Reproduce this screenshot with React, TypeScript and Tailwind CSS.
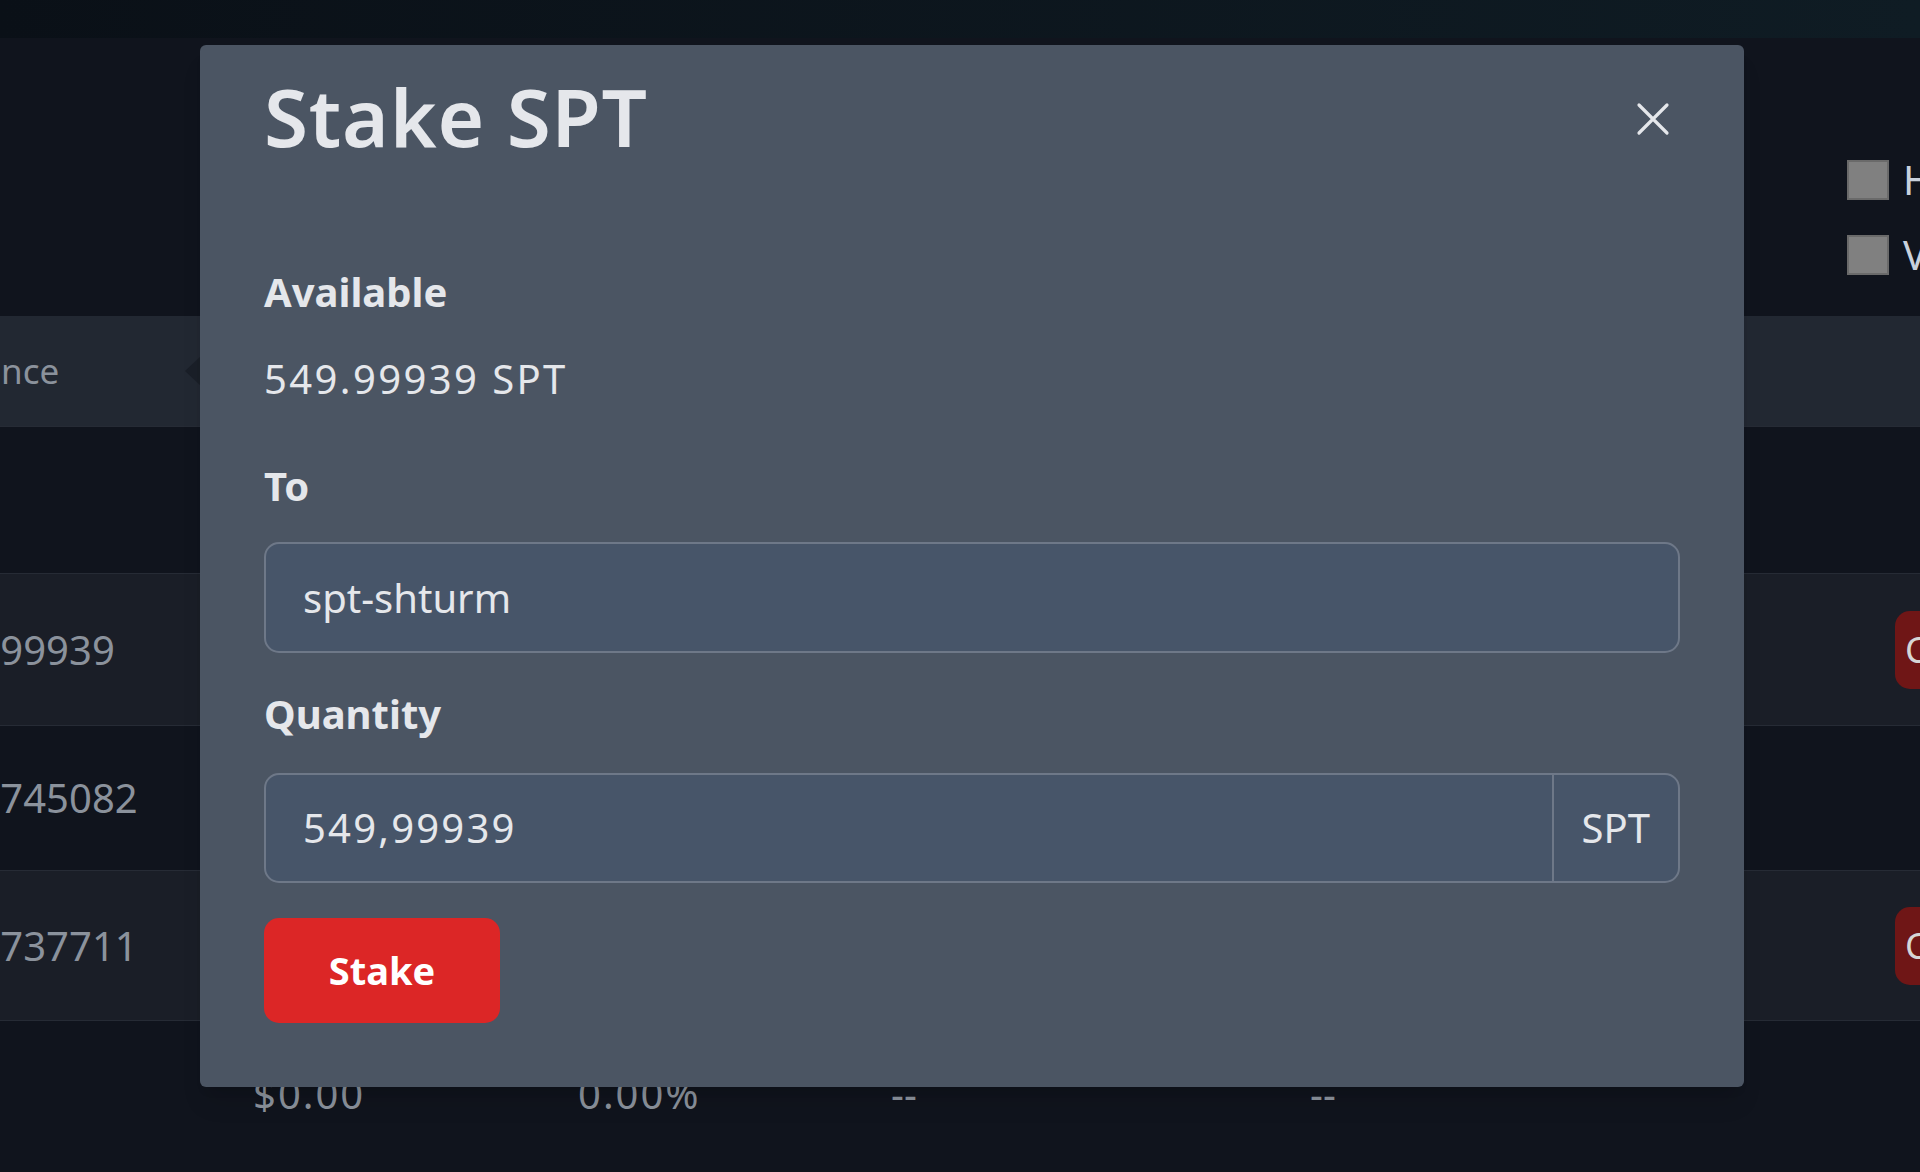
import type { FC } from "react";

const CloseIcon: FC = () => (
  <svg width="34" height="34" viewBox="0 0 34 34" fill="none">
    <path d="M3 3L31 31M31 3L3 31" stroke="#e5e7eb" strokeWidth="3.2" strokeLinecap="round" />
  </svg>
);

const rows = [
  { id: 0, balance: "", light: false, h: "h-[147px]", action: false },
  { id: 1, balance: "549.99939", light: true, h: "h-[152px]", action: true },
  { id: 2, balance: "1.20745082", light: false, h: "h-[145px]", action: false },
  { id: 3, balance: "2.21737711", light: true, h: "h-[150px]", action: true },
];

const StakeModal: FC = () => {
  return (
    <div className="absolute left-[200px] top-[45px] flex w-[1544px] flex-col rounded-[6px] bg-[#4b5563] px-[64px] pt-[23px] pb-[64px] text-[#e5e7eb] shadow-xl">
      <div className="flex items-center justify-between">
        <h2 className="text-[80px] leading-[96px] font-semibold tracking-[0.01em]">Stake SPT</h2>
        <button className="mt-[6px] mr-[10px]">
          <CloseIcon />
        </button>
      </div>

      <div className="mt-[98px] text-[40px] leading-[60px] font-bold">Available</div>
      <div className="mt-[27px] text-[40px] leading-[60px] tracking-[0.06em]">549.99939 SPT</div>

      <div className="mt-[47px] text-[40px] leading-[60px] font-bold">To</div>
      <div className="mt-[26px] flex h-[111px] items-center rounded-[15px] border-2 border-[#6e7888] bg-[#475569] px-[37px] text-[40px]">
        spt-shturm
      </div>

      <div className="mt-[31px] text-[40px] leading-[60px] font-bold">Quantity</div>
      <div className="mt-[29px] flex h-[110px] rounded-[15px] border-2 border-[#6e7888] bg-[#475569] text-[40px]">
        <div className="flex flex-1 items-center px-[37px] tracking-[0.055em]">549,99939</div>
        <div className="flex items-center border-l-2 border-[#6e7888] px-[28px]">SPT</div>
      </div>

      <button className="mt-[35px] flex h-[105px] w-[236px] items-center justify-center rounded-[15px] bg-[#dc2626] text-[38px] font-bold text-white">
        Stake
      </button>
    </div>
  );
};

export default function App() {
  return (
    <div className="relative h-[1172px] w-[1920px] overflow-hidden bg-[#10141d] font-['Noto_Sans',sans-serif]">
      <div className="h-[38px] bg-gradient-to-r from-[#0a1017] to-[#0f1c24]" />

      <div className="flex h-[278px] justify-end pt-[122px]">
        <div className="flex w-[73px] flex-col gap-[35px] whitespace-nowrap">
          <label className="flex items-center gap-[14px] text-[40px] leading-[40px] text-[#c9d1dc]">
            <span className="h-[40px] w-[42px] shrink-0 border-2 border-[#6a6a6a] bg-[#808080]" />
            Hide zero balances
          </label>
          <label className="flex items-center gap-[14px] text-[40px] leading-[40px] text-[#c9d1dc]">
            <span className="h-[40px] w-[42px] shrink-0 border-2 border-[#6a6a6a] bg-[#808080]" />
            View all
          </label>
        </div>
      </div>

      <div className="ml-[-79px] w-[2200px] text-[40px] text-[#8b929c]">
        <div className="flex h-[110px] items-center bg-[#222832]">
          <div className="flex w-[332px] shrink-0 items-center justify-between pl-[9px] text-[35px]">
            <span>Balance</span>
            <svg width="16" height="30" viewBox="0 0 16 30" className="mr-[52px]">
              <path d="M16 0L0 15L16 30Z" fill="#1a1f28" />
            </svg>
          </div>
        </div>

        {rows.map((r) => (
          <div
            key={r.id}
            className={`flex items-center border-t border-[#262b35] ${r.h} ${r.light ? "bg-[#1a1e27]" : "bg-[#10141d]"}`}
          >
            <div className="w-[1974px] shrink-0">{r.balance}</div>
            {r.action && (
              <button className="flex h-[78px] w-[160px] shrink-0 items-center rounded-[15px] bg-[#6f1616] px-[10px] text-[36px] text-[#d6d6d6]">
                Claim
              </button>
            )}
          </div>
        ))}

        <div className="flex h-[152px] items-center border-t border-[#262b35] pb-[6px]">
          <div className="w-[332px] shrink-0" />
          <div className="w-[325px] shrink-0 tracking-[0.05em]">$0.00</div>
          <div className="w-[313px] shrink-0 tracking-[0.05em]">0.00%</div>
          <div className="w-[419px] shrink-0">--</div>
          <div className="w-[585px] shrink-0">--</div>
        </div>
      </div>

      <StakeModal />
    </div>
  );
}
